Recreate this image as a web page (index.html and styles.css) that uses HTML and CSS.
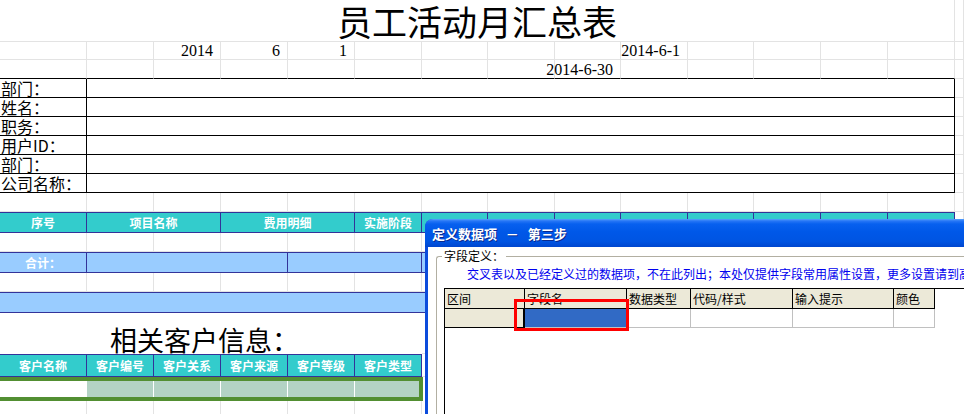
FILE: index.html
```html
<!DOCTYPE html>
<html lang="zh-CN">
<head>
<meta charset="utf-8">
<title>员工活动月汇总表</title>
<link rel="stylesheet" href="styles.css">
</head>
<body>
<div class="sheet">
  <div class="row r-title">
    <div class="c s14 title">员工活动月汇总表</div><div class="c"></div>
  </div>
  <div class="row r-date1">
    <div class="c"></div><div class="c"></div><div class="c num">2014</div><div class="c num">6</div><div class="c num">1</div>
    <div class="c"></div><div class="c"></div><div class="c"></div><div class="c"></div><div class="c num">2014-6-1</div>
    <div class="c"></div><div class="c"></div><div class="c"></div><div class="c"></div><div class="c"></div>
  </div>
  <div class="row r-date2">
    <div class="c bb"></div><div class="c bb"></div><div class="c bb"></div><div class="c bb"></div><div class="c bb"></div>
    <div class="c bb"></div><div class="c bb"></div><div class="c bb"></div><div class="c bb num">2014-6-30</div><div class="c bb"></div>
    <div class="c bb"></div><div class="c bb"></div><div class="c bb"></div><div class="c bb"></div><div class="c"></div>
  </div>
  <div class="row r-info"><div class="c lbl">部门：</div><div class="c val s13"></div><div class="c"></div></div>
  <div class="row r-info"><div class="c lbl">姓名：</div><div class="c val s13"></div><div class="c"></div></div>
  <div class="row r-info"><div class="c lbl">职务：</div><div class="c val s13"></div><div class="c"></div></div>
  <div class="row r-info"><div class="c lbl">用户ID：</div><div class="c val s13"></div><div class="c"></div></div>
  <div class="row r-info"><div class="c lbl">部门：</div><div class="c val s13"></div><div class="c"></div></div>
  <div class="row r-info"><div class="c lbl">公司名称：</div><div class="c val s13"></div><div class="c"></div></div>
  <div class="row r-blank">
    <div class="c"></div><div class="c"></div><div class="c"></div><div class="c"></div><div class="c"></div>
    <div class="c"></div><div class="c"></div><div class="c"></div><div class="c"></div><div class="c"></div>
    <div class="c"></div><div class="c"></div><div class="c"></div><div class="c"></div><div class="c"></div>
  </div>
  <div class="row r-head">
    <div class="c hd">序号</div><div class="c hd s2">项目名称</div><div class="c hd s2">费用明细</div><div class="c hd">实施阶段</div>
    <div class="c hd"></div><div class="c hd"></div><div class="c hd"></div><div class="c hd"></div>
    <div class="c hd"></div><div class="c hd"></div><div class="c hd"></div><div class="c hd"></div>
    <div class="c"></div>
  </div>
  <div class="row r-blank">
    <div class="c"></div><div class="c"></div><div class="c"></div><div class="c"></div><div class="c"></div>
    <div class="c"></div><div class="c"></div><div class="c"></div><div class="c"></div><div class="c"></div>
    <div class="c"></div><div class="c"></div><div class="c"></div><div class="c"></div><div class="c"></div>
  </div>
  <div class="row r-band">
    <div class="c lb lbtxt">合计：</div><div class="c lb s3"></div><div class="c lb s2"></div><div class="c lb s8"></div><div class="c"></div>
  </div>
  <div class="row r-blank">
    <div class="c"></div><div class="c"></div><div class="c"></div><div class="c"></div><div class="c"></div>
    <div class="c"></div><div class="c"></div><div class="c"></div><div class="c"></div><div class="c"></div>
    <div class="c"></div><div class="c"></div><div class="c"></div><div class="c"></div><div class="c"></div>
  </div>
  <div class="row r-band">
    <div class="c lb s14"></div><div class="c"></div>
  </div>
  <div class="row r-sub">
    <div class="c s6 subtitle">相关客户信息：</div>
    <div class="c"></div><div class="c"></div><div class="c"></div><div class="c"></div>
    <div class="c"></div><div class="c"></div><div class="c"></div><div class="c"></div><div class="c"></div>
  </div>
  <div class="row r-chead">
    <div class="c hd">客户名称</div><div class="c hd">客户编号</div><div class="c hd">客户关系</div>
    <div class="c hd">客户来源</div><div class="c hd">客户等级</div><div class="c hd">客户类型</div>
    <div class="c"></div><div class="c"></div><div class="c"></div><div class="c"></div><div class="c"></div>
    <div class="c"></div><div class="c"></div><div class="c"></div><div class="c"></div>
  </div>
  <div class="r-green">
    <div class="green-box">
      <div class="gc gc-white"></div><div class="gc"></div><div class="gc"></div><div class="gc"></div><div class="gc"></div><div class="gc"></div>
    </div>
  </div>
  <div class="row r-rest">
    <div class="c"></div><div class="c"></div><div class="c"></div><div class="c"></div><div class="c"></div>
    <div class="c"></div><div class="c"></div><div class="c"></div><div class="c"></div><div class="c"></div>
    <div class="c"></div><div class="c"></div><div class="c"></div><div class="c"></div><div class="c"></div>
  </div>
</div>

<div class="dialog">
  <div class="dlg-title">定义数据项&nbsp;&nbsp; －&nbsp;&nbsp; 第三步</div>
  <div class="dlg-body">
    <fieldset class="group">
      <legend>字段定义：</legend>
      <div class="note">交叉表以及已经定义过的数据项，不在此列出；本处仅提供字段常用属性设置，更多设置请到高级属性中设置。</div>
      <div class="grid">
        <div class="g-row g-head">
          <div class="gh w1">区间</div><div class="gh w2">字段名</div><div class="gh w3">数据类型</div>
          <div class="gh w4">代码/样式</div><div class="gh w5">输入提示</div><div class="gh w6">颜色</div>
        </div>
        <div class="g-row g-data">
          <div class="gd w1 fixed"></div><div class="gd w2 sel"></div><div class="gd w3"></div>
          <div class="gd w4"></div><div class="gd w5"></div><div class="gd w6"></div>
        </div>
        <div class="mark"></div>
      </div>
    </fieldset>
  </div>
</div>
</body>
</html>
```

FILE: styles.css
```css
* { box-sizing: border-box; }

html, body {
  margin: 0;
  padding: 0;
  background: #fff;
  overflow: hidden;
}

body {
  width: 964px;
  height: 414px;
  position: relative;
  font-family: "Noto Sans CJK SC", "Liberation Sans", sans-serif;
  font-size: 12px;
  color: #000;
}

.sheet { width: 964px; }

.row {
  display: grid;
  grid-template-columns: 87px 67px 67px 67px 67px 67px 66px 67px 66px 67px 66px 67px 67px 67px 9px;
}

.c {
  border-right: 1px solid #e3e3e3;
  border-bottom: 1px solid #e3e3e3;
  min-width: 0;
  white-space: nowrap;
}

.s2 { grid-column: span 2; }
.s3 { grid-column: span 3; }
.s6 { grid-column: span 6; }
.s8 { grid-column: span 8; }
.s13 { grid-column: span 13; }
.s14 { grid-column: span 14; }

.r-title { height: 42px; }
.r-date1 { height: 18px; }
.r-date2 { height: 19px; }
.r-info { height: 19px; }
.r-blank { height: 19px; }
.r-head { height: 21px; }
.r-band { height: 21px; }
.r-sub { height: 41px; }
.r-chead { height: 23px; }
.r-rest { height: 20px; }

.title {
  font-size: 35px;
  line-height: 41px;
  text-align: center;
}

.num {
  display: flex;
  justify-content: flex-end;
  align-items: flex-end;
  padding-right: 7px;
  font-family: "Liberation Serif", serif;
  font-size: 16px;
  line-height: 17px;
}

.bb { border-bottom-color: #000; }

.lbl {
  border-right-color: #000;
  border-bottom-color: #000;
  font-size: 16px;
  line-height: 18px;
  padding-left: 1px;
}

.val {
  border-right-color: #000;
  border-bottom-color: #000;
}

.hd {
  background: #33cccc;
  border-top: 1px solid #333399;
  border-right-color: #333399;
  border-bottom-color: #333399;
  color: #fff;
  font-weight: bold;
  text-align: center;
  line-height: 19px;
}

.r-chead .hd { line-height: 21px; }

.lb {
  background: #99ccff;
  border-top: 1px solid #333399;
  border-right-color: #333399;
  border-bottom-color: #333399;
}

.lbtxt {
  color: #fff;
  font-weight: bold;
  text-align: center;
  line-height: 19px;
}

.r-sub .subtitle {
  border-right: none;
  border-bottom: none;
  font-size: 27px;
  line-height: 29px;
  padding: 12px 0 0 110px;
}

.r-green {
  display: flex;
  height: 24px;
}

.green-box {
  display: grid;
  grid-template-columns: 87px 67px 67px 67px 67px 64px;
  width: 427px;
  margin-left: -4px;
  border: 4px solid #528f32;
}

.gc {
  background: #b3d3c4;
  border-right: 1px solid #fff;
}

.gc-white { background: #fff; }
.gc:last-child { border-right: none; }

/* dialog */
.dialog {
  position: absolute;
  left: 425px;
  top: 219px;
  width: 560px;
  height: 220px;
  background: #0c4cdc;
  border-radius: 8px 0 0 0;
  display: flex;
  flex-direction: column;
  overflow: hidden;
}

.dlg-title {
  height: 28px;
  flex: none;
  background: linear-gradient(to bottom, #5aa2fb 0px, #2676f6 2px, #0760ef 5px, #0058e8 45%, #0054e2 80%, #0046cf 100%);
  color: #fff;
  font-weight: bold;
  font-size: 13px;
  padding-left: 7px;
  display: flex;
  align-items: center;
  text-shadow: 1px 1px 0 #0a2a8e;
  white-space: nowrap;
}

.dlg-body {
  flex: 1;
  margin-left: 3px;
  background: #fff;
  padding-top: 2px;
}

.group {
  margin: 0 0 0 8px;
  padding: 0;
  border: 1px solid #b2afa2;
  border-right: none;
  border-radius: 3px 0 0 0;
  min-width: 0;
  height: 300px;
}

.group legend {
  margin-left: 5px;
  padding: 0 2px;
  font-size: 12px;
  line-height: 14px;
}

.note {
  margin: 3px 0 0 30px;
  color: #0000ee;
  font-size: 12px;
  line-height: 16px;
  white-space: nowrap;
}

.grid {
  position: relative;
  margin: 6px 0 0 7px;
  border-top: 1px solid #000;
  border-left: 1px solid #000;
  height: 200px;
  background: #fff;
}

.g-row { display: flex; }

.gh, .gd { flex: none; }

.w1 { width: 80px; }
.w2 { width: 102px; }
.w3 { width: 64px; }
.w4 { width: 102px; }
.w5 { width: 101px; }
.w6 { width: 41px; }

.gh {
  height: 20px;
  background: #ece9d8;
  border-right: 1px solid #000;
  border-bottom: 1px solid #000;
  padding-left: 2px;
  font-size: 12px;
  line-height: 19px;
  white-space: nowrap;
}

.gd {
  height: 19px;
  border-right: 1px solid #c0c0c0;
  border-bottom: 1px solid #c0c0c0;
}

.gd.fixed {
  background: #ece9d8;
  border-right: 2px solid #000;
  border-bottom: 1px solid #000;
}

.gd.sel { background: #316ac5; }

.mark {
  position: absolute;
  left: 69px;
  top: 10px;
  width: 115px;
  height: 32px;
  border: 3px solid #ff0000;
}
```
